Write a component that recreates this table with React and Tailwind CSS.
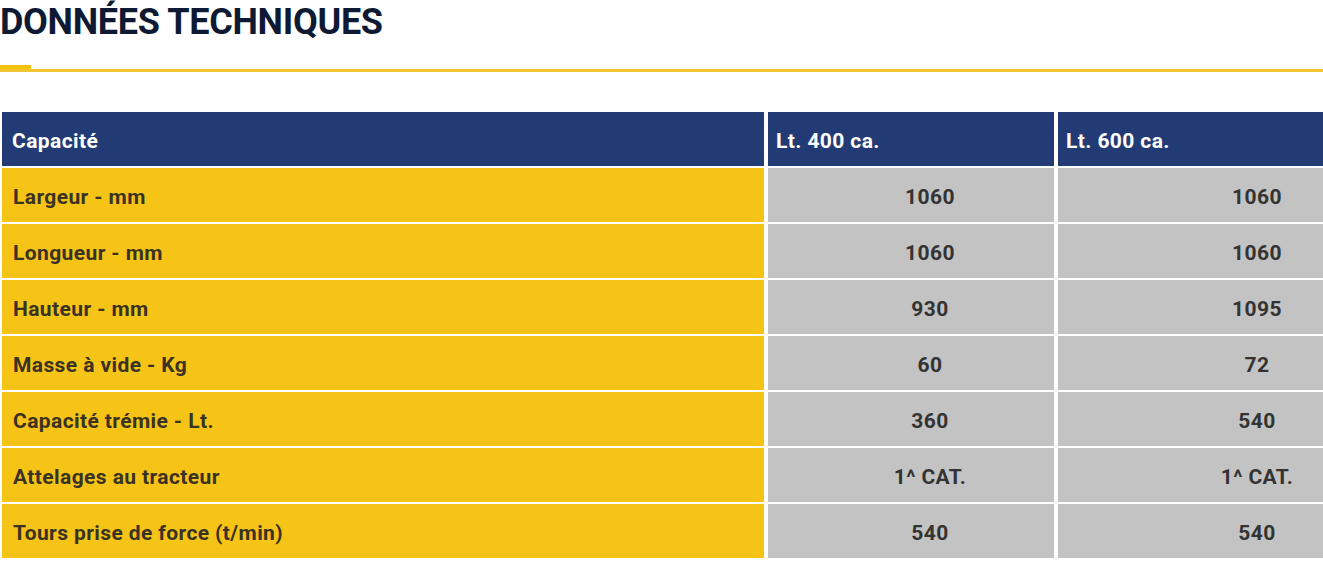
export default function App() {
  const rows = [
    ["Largeur - mm", "1060", "1060"],
    ["Longueur - mm", "1060", "1060"],
    ["Hauteur - mm", "930", "1095"],
    ["Masse à vide - Kg", "60", "72"],
    ["Capacité trémie - Lt.", "360", "540"],
    ["Attelages au tracteur", "1^ CAT.", "1^ CAT."],
    ["Tours prise de force (t/min)", "540", "540"],
  ];
  const font = { fontFamily: "Roboto, 'Liberation Sans', sans-serif" };
  const cell = "h-[54px] font-bold text-[21px] tracking-[0.4px] flex items-center pt-[5px]";
  return (
    <div className="w-[1323px] h-[564px] overflow-hidden bg-white" style={font}>
      <h2 className="text-[36px] leading-[44px] font-bold text-[#0e1a34] tracking-[-0.3px]">
        DONNÉES TECHNIQUES
      </h2>
      <div className="relative mt-[21px] h-[7px]">
        <div className="absolute left-0 top-0 w-[31px] h-[7px] bg-[#f4c20f]" />
        <div className="absolute left-0 right-0 top-[4px] h-[3px] bg-[#f4c532]" />
      </div>
      <div className="mt-[40px] pl-[2px] grid grid-cols-[762px_286px_360px] gap-x-[4px] gap-y-[2px] w-[1420px]">
        <div className={cell + " bg-[#233b74] text-white pl-[10px]"}>Capacité</div>
        <div className={cell + " bg-[#233b74] text-white pl-[8px]"}>Lt. 400 ca.</div>
        <div className={cell + " bg-[#233b74] text-white pl-[8px]"}>Lt. 600 ca.</div>
        {rows.map((r, i) => [
          <div key={i + "a"} className={cell + " bg-[#f6c317] text-[#3a3222] pl-[11px]"}>{r[0]}</div>,
          <div key={i + "b"} className={cell + " bg-[#c3c3c3] text-[#333333] justify-center pl-[38px]"}>{r[1]}</div>,
          <div key={i + "c"} className={cell + " bg-[#c3c3c3] text-[#333333] justify-center pl-[38px]"}>{r[2]}</div>,
        ])}
      </div>
    </div>
  );
}
